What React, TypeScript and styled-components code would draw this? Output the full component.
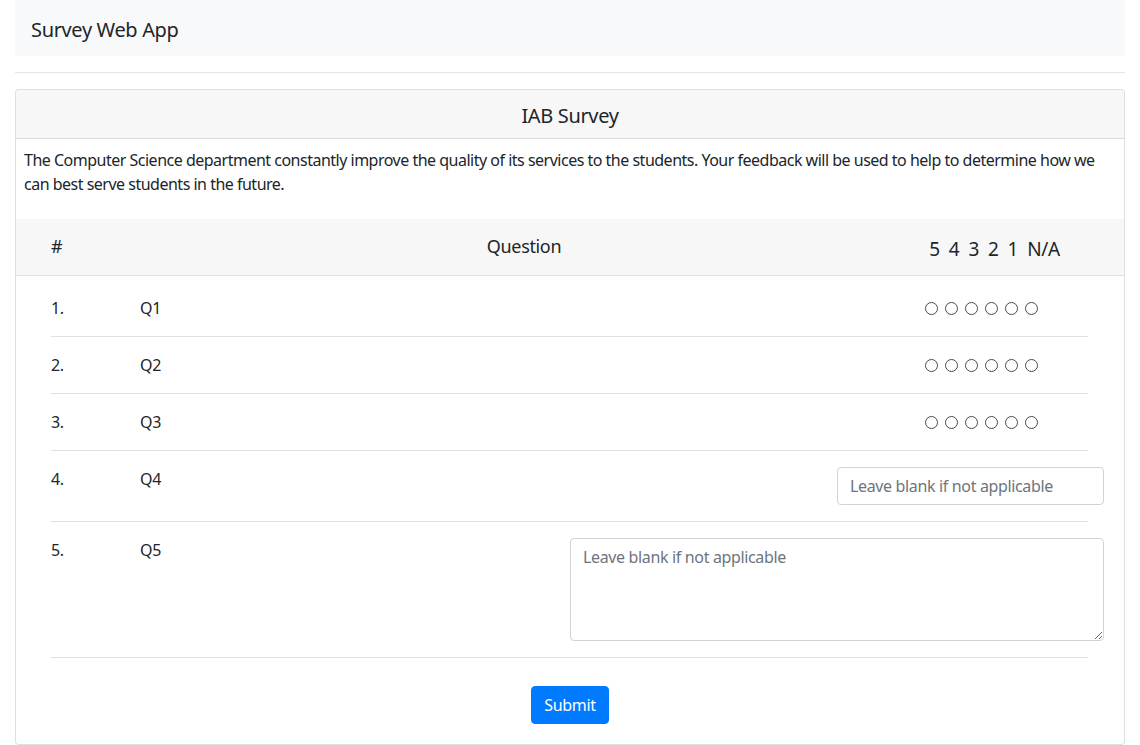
import styled, { createGlobalStyle } from "styled-components";

const GlobalStyle = createGlobalStyle`
  body {
    margin: 0;
    font-family: "Noto Sans", "Open Sans", Arial, sans-serif;
    font-size: 16px;
    line-height: 1.5;
    letter-spacing: -0.35px;
    color: #212529;
    background: #fff;
  }
  * { box-sizing: border-box; }
`;

interface Question {
  id: number;
  label: string;
  kind: "rating" | "input" | "textarea";
}

const questions: Question[] = [
  { id: 1, label: "Q1", kind: "rating" },
  { id: 2, label: "Q2", kind: "rating" },
  { id: 3, label: "Q3", kind: "rating" },
  { id: 4, label: "Q4", kind: "input" },
  { id: 5, label: "Q5", kind: "textarea" },
];

const ratings = ["5", "4", "3", "2", "1", "N/A"];

const App = () => {
  return (
    <Page>
      <GlobalStyle />
      <Navbar>
        <Brand>Survey Web App</Brand>
      </Navbar>
      <Divider />
      <Card>
        <CardHeader>
          <Title>IAB Survey</Title>
        </CardHeader>
        <Intro>
          The Computer Science department constantly improve the quality of its services to the
          students. Your feedback will be used to help to determine how we can best serve students
          in the future.
        </Intro>
        <TableHead>
          <HeadCell>#</HeadCell>
          <HeadCell center>Question</HeadCell>
          <RatingHead>{ratings.join(" ")}</RatingHead>
        </TableHead>
        <List>
          {questions.map((q) => (
            <Row key={q.id}>
              <Cell>{q.id}.</Cell>
              <Cell>{q.label}</Cell>
              {q.kind === "rating" && (
                <Radios>
                  {ratings.map((r) => (
                    <Radio key={r} type="radio" name={`q${q.id}`} value={r} />
                  ))}
                </Radios>
              )}
              {q.kind === "input" && (
                <TextInput type="text" placeholder="Leave blank if not applicable" />
              )}
              {q.kind === "textarea" && <TextArea placeholder="Leave blank if not applicable" />}
            </Row>
          ))}
        </List>
        <Actions>
          <SubmitButton type="button">Submit</SubmitButton>
        </Actions>
      </Card>
    </Page>
  );
};

const Page = styled.div`
  padding: 0 15px;
`;

const Navbar = styled.nav`
  background: #f8f9fa;
  padding: 8px 16px;
`;

const Brand = styled.span`
  display: inline-block;
  font-size: 20px;
  line-height: 30px;
  padding: 7px 0 3px;
`;

const Divider = styled.hr`
  margin: 16px 0;
  border: 0;
  border-top: 1px solid rgba(0, 0, 0, 0.1);
`;

const Card = styled.div`
  border: 1px solid rgba(0, 0, 0, 0.125);
  border-radius: 4px;
  background: #fff;
`;

const CardHeader = styled.div`
  background: rgba(0, 0, 0, 0.03);
  border-bottom: 1px solid rgba(0, 0, 0, 0.125);
  padding: 14px 20px 10px;
  border-radius: 3px 3px 0 0;
`;

const Title = styled.h5`
  margin: 0;
  font-size: 20px;
  font-weight: 400;
  line-height: 24px;
  text-align: center;
`;

const Intro = styled.p`
  margin: 0 0 16px;
  padding: 9px 8px 7px;
  letter-spacing: -0.5px;
`;

const TableHead = styled.div`
  display: grid;
  grid-template-columns: 89px 768px 1fr;
  align-items: center;
  height: 57px;
  padding: 0 35px;
  background: #f7f7f7;
  border-bottom: 1px solid #dee2e6;
`;

const HeadCell = styled.div<{ center?: boolean }>`
  font-size: 18px;
  text-align: ${(p) => (p.center ? "center" : "left")};
  padding-bottom: 2px;
`;

const RatingHead = styled.div`
  font-size: 19px;
  text-align: center;
  white-space: pre;
  word-spacing: 4.5px;
  padding: 4px 8px 0 0;
`;

const List = styled.div`
  padding: 4px 36px 0 35px;
`;

const Row = styled.div`
  display: grid;
  grid-template-columns: 89px 1fr auto;
  align-items: start;
  padding: 16px 0;
  border-bottom: 1px solid #dee2e6;
  line-height: 24px;
`;

const Cell = styled.div`
  font-size: 16px;
`;

const Radios = styled.div`
  display: flex;
  gap: 7px;
  align-items: center;
  height: 24px;
  margin-right: 50px;
`;

const Radio = styled.input`
  appearance: none;
  width: 13px;
  height: 13px;
  margin: 0;
  border: 1px solid #4a4a4a;
  border-radius: 50%;
  background: #fff;
`;

const fieldStyles = `
  font-family: inherit;
  font-size: 16px;
  line-height: 24px;
  letter-spacing: -0.35px;
  color: #495057;
  border: 1px solid #ced4da;
  border-radius: 4px;
  padding: 6px 12px;
  background: #fff;
  margin-right: -16px;
  &::placeholder { color: #6c757d; }
`;

const TextInput = styled.input`
  ${fieldStyles}
  width: 267px;
  height: 38px;
`;

const TextArea = styled.textarea`
  ${fieldStyles}
  width: 534px;
  height: 103px;
  display: block;
`;

const Actions = styled.div`
  display: flex;
  justify-content: center;
  padding: 28px 0 20px;
`;

const SubmitButton = styled.button`
  font-family: inherit;
  font-size: 16px;
  line-height: 24px;
  letter-spacing: -0.35px;
  color: #fff;
  background: #007bff;
  border: 1px solid #007bff;
  border-radius: 4px;
  padding: 6px 12px;
  cursor: pointer;
`;

export default App;
